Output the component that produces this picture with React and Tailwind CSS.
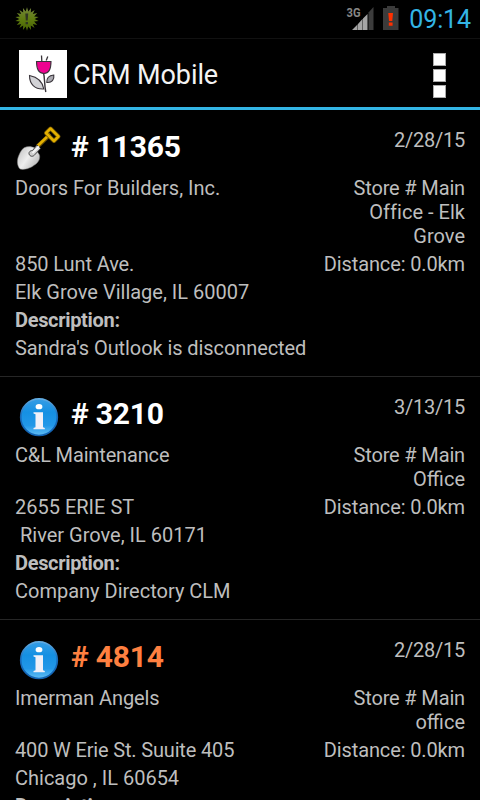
import React from "react";

function Shovel() {
  return (
    <svg width="48" height="48" viewBox="0 0 48 48" fill="none">
      <path d="M22.500 21.500 L35 9.500" stroke="#6b5000" strokeWidth="4.200" />
      <path d="M22.500 21 L35 9" stroke="#e3b000" strokeWidth="2.600" />
      <path d="M35.500 3.500 L43.500 11.500 L39 16 L31 8 Z" stroke="#6b5000" strokeWidth="4" strokeLinejoin="round" />
      <path d="M35.500 3.500 L43.500 11.500 L39 16 L31 8 Z" stroke="#e3b000" strokeWidth="2.500" strokeLinejoin="round" />
      <path d="M9.500 22.500 C13 21 17 21.500 20 23 L24.500 30 C25.500 34 23 38 19.500 40 C16 43 9 45.500 5 44 C2 41 1.500 35 4 30 C5.500 26.500 7 24 9.500 22.500 Z" fill="url(#blade)" stroke="#777" strokeWidth=".5" />
      <path d="M14.500 30 C13 27.500 15 25.500 17.500 25.500 L22 20 L25.500 23.500 L20 29.500 C18.500 31.500 16 32 14.500 30 Z" fill="#cfcfcf" stroke="#444" strokeWidth="1" />
      <path d="M17.500 28 L24 21.500" stroke="#f5f5f5" strokeWidth="1.800" />
      <defs>
        <linearGradient id="blade" x1="4" y1="26" x2="24" y2="40" gradientUnits="userSpaceOnUse">
          <stop stopColor="#c9c9c9" />
          <stop offset=".45" stopColor="#eeeeee" />
          <stop offset="1" stopColor="#b5b5b5" />
        </linearGradient>
      </defs>
    </svg>
  );
}

function Info() {
  return (
    <svg width="48" height="48" viewBox="0 0 48 48" fill="none">
      <defs>
        <linearGradient id="ball" x1="0" y1="5" x2="0" y2="43" gradientUnits="userSpaceOnUse">
          <stop stopColor="#3b9fe4" />
          <stop offset=".4" stopColor="#1590e3" />
          <stop offset=".75" stopColor="#2297e8" />
          <stop offset="1" stopColor="#5fbdf4" />
        </linearGradient>
        <linearGradient id="rim" x1="0" y1="5" x2="0" y2="43" gradientUnits="userSpaceOnUse">
          <stop stopColor="#6ab4e8" />
          <stop offset=".5" stopColor="#1769ba" />
          <stop offset="1" stopColor="#1263b3" />
        </linearGradient>
      </defs>
      <circle cx="24" cy="25.200" r="18.300" fill="url(#ball)" stroke="url(#rim)" strokeWidth="1.700" />
      <ellipse cx="24" cy="14.700" rx="3.400" ry="2.600" fill="#fff" />
      <path d="M18.500 20.300 H28 V35.300 L29.800 36 V37.300 H18.500 V36 L20.500 35.300 V22.300 L18.500 21.600 Z" fill="#f1f0f8" />
    </svg>
  );
}

function Tulip() {
  return (
    <svg width="48" height="48" viewBox="0 0 48 48" className="bg-white" fill="none" stroke="#39343a">
      <path d="M22.500 5.500 L22.800 11 M28.800 6.500 L27.200 10.500" strokeWidth="1.300" />
      <path d="M24.500 23 C26 28 25 33 26.800 42" strokeWidth="1.400" />
      <path d="M17.500 11.500 H32 C32 18 30 23.500 25 23.500 C19.500 23.500 17.500 18 17.500 11.500 Z" fill="#ee0290" strokeWidth="1.100" />
      <path d="M10.500 25.500 C18 27 23.500 31 24.800 39 C15.500 39.500 10.500 34 10.500 25.500 Z" fill="#d2d2d6" strokeWidth="1.100" />
      <path d="M34.800 25 C35.500 29.500 33 33 27.800 32.500 C27.500 28 30 25.500 34.800 25 Z" fill="#aaa9b0" strokeWidth="1.100" />
    </svg>
  );
}

const BURST = Array.from({ length: 36 }, (_, i) => {
  const a = (i * Math.PI) / 18;
  const r = i % 2 ? 7.6 : 11.8;
  return `${(12 + r * Math.sin(a)).toFixed(2)},${(12 - r * Math.cos(a)).toFixed(2)}`;
}).join(" ");

function Burst() {
  return (
    <svg width="24" height="24" viewBox="0 0 24 24">
      <defs>
        <linearGradient id="burst" x1="0" y1="0" x2="0" y2="1">
          <stop stopColor="#75863e" />
          <stop offset=".5" stopColor="#5f7c10" />
          <stop offset="1" stopColor="#486302" />
        </linearGradient>
      </defs>
      <polygon points={BURST} fill="url(#burst)" />
      <path d="M10.300 6.500 H13.200 L12.700 13.500 H10.800 Z M10.600 15 H13 V17.300 H10.600 Z" fill="#303522" />
    </svg>
  );
}

function Signal() {
  return (
    <svg width="29" height="26" viewBox="0 0 29 26">
      <text x="0.500" y="12" fill="#878787" fontFamily="Roboto, sans-serif" fontWeight="700" fontSize="13.500" textLength="14" lengthAdjust="spacingAndGlyphs">3G</text>
      <path d="M6 25 L11 20 V25 Z M12 19 L16 14.500 V25 H12 Z M17 13.500 L21.500 9 V25 H17 Z" fill="#a5a5a5" />
      <path d="M11.500 19.500 V25 M16.500 14 V25" stroke="#606060" strokeWidth="1" />
      <path d="M22.500 7.500 L27.500 2 V25 H22.500 Z" fill="#3c3c3c" />
    </svg>
  );
}

function Battery() {
  return (
    <svg width="16" height="24" viewBox="0 0 16 24">
      <path d="M4 0 H12 V2 H15.500 V24 H0 V2 H4 Z" fill="#3b3b3b" />
      <path d="M5.300 7 H10 L9.300 15 H6 Z M5.800 16.500 H9.600 V19.700 H5.800 Z" fill="#ff3000" />
    </svg>
  );
}

function Ticket({ icon, number, color, date, company, companyClass, store, address, addressClass, city, description, descriptionClass }) {
  return (
    <li className="border-b border-[#262626] px-[15px] pb-[14px]">
      <div className="flex h-16">
        <div className="pt-[15px]">{icon}</div>
        <h2 className={`ml-2 pt-[19px] text-[30px] leading-[36px] font-bold tracking-[-0.2px] ${color}`}>{number}</h2>
        <span className="ml-auto pt-[18px] tracking-[-0.25px]">{date}</span>
      </div>
      <div className="flex justify-between py-0.5">
        <span className={companyClass}>{company}</span>
        <span className="text-right">
          {store.map((line) => (
            <span key={line} className={`block ${line.startsWith("Store") ? "tracking-[-0.15px]" : line.includes("Elk") ? "tracking-[0.02px]" : ""}`}>{line}</span>
          ))}
        </span>
      </div>
      <div className="flex justify-between py-0.5">
        <span className={addressClass}>{address}</span>
        <span className="tracking-[-0.13px]">Distance: 0.0km</span>
      </div>
      <p className="py-0.5 whitespace-pre">{city}</p>
      <p className="py-0.5 font-bold tracking-[-0.32px]">Description:</p>
      <p className={`py-0.5 ${descriptionClass}`}>{description}</p>
    </li>
  );
}

export default function App() {
  return (
    <div className="h-[800px] w-[480px] overflow-hidden bg-black font-[Roboto,sans-serif] text-[20px] leading-6 text-[#bebebe]">
      <div className="flex h-[38px] items-start pr-[9px] pl-[15px]">
        <div className="pt-[7px]"><Burst /></div>
        <div className="ml-auto pt-[5px]"><Signal /></div>
        <div className="ml-2 pt-1.5"><Battery /></div>
        <span className="ml-[10px] pt-[5px] text-[25px] leading-[30px] tracking-[-0.1px] text-[#33b5e5]">09:14</span>
      </div>
      <header className="flex h-[72px] items-center border-t border-b-3 border-t-[#111] border-b-[#33b5e5] pt-0.5 pr-[34px] pl-[19px]">
        <Tulip />
        <h1 className="ml-1.5 pt-0.5 text-[27px] leading-8 tracking-[-0.1px] text-[#f3f3f3]">CRM Mobile</h1>
        <div className="ml-auto flex flex-col gap-[3px] pt-0.5">
          <i className="size-[13px] border border-[#aaa] bg-white" />
          <i className="size-[13px] border border-[#aaa] bg-white" />
          <i className="size-[13px] border border-[#aaa] bg-white" />
        </div>
      </header>
      <ul>
        <Ticket icon={<Shovel />} number="# 11365" color="text-white" date="2/28/15" company="Doors For Builders, Inc." companyClass="" store={["Store # Main", "Office - Elk", "Grove"]} address="850 Lunt Ave." addressClass="tracking-[-0.1px]" city="Elk Grove Village, IL 60007" description="Sandra's Outlook is disconnected" descriptionClass="tracking-[-0.08px]" />
        <Ticket icon={<Info />} number="# 3210" color="text-white" date="3/13/15" company="C&L Maintenance" companyClass="tracking-[-0.15px]" store={["Store # Main", "Office"]} address="2655 ERIE ST" addressClass="" city=" River Grove, IL 60171" description="Company Directory CLM" descriptionClass="" />
        <Ticket icon={<Info />} number="# 4814" color="text-[#ff8040]" date="2/28/15" company="Imerman Angels" companyClass="tracking-[-0.1px]" store={["Store # Main", "office"]} address="400 W Erie St. Suuite 405" addressClass="tracking-[-0.16px]" city="Chicago , IL 60654" description="" descriptionClass="" />
      </ul>
    </div>
  );
}
